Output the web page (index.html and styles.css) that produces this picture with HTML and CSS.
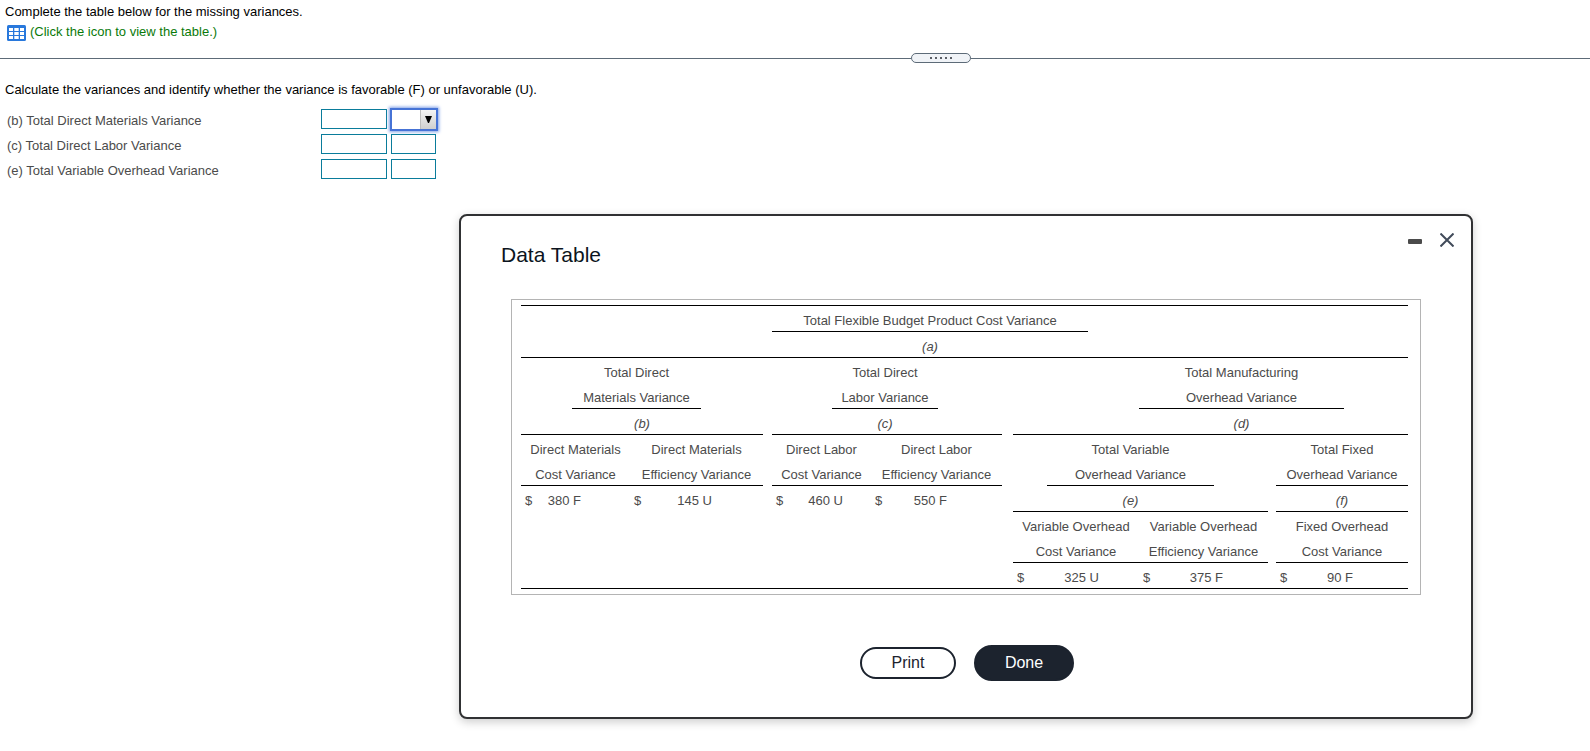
FILE: index.html
```html
<!DOCTYPE html>
<html lang="en">
<head>
  <meta charset="UTF-8">
  <meta name="viewport" content="width=device-width, initial-scale=1.0">
  <title>Data Table</title>
  <link rel="stylesheet" href="styles.css">
</head>
<body>

  <div class="question">
    <p>Complete the table below for the missing variances.</p>
    <a href="#" class="table-link">
      <svg class="table-icon" width="19" height="16" viewBox="0 0 19 16" aria-hidden="true">
        <rect width="19" height="16" rx="1.5" fill="#2878dc"/>
        <path fill="#fff" d="M2 3h4v3H2zM7.3 3h4.4v3H7.3zM13 3h4v3h-4zM2 7h4v3H2zM7.3 7h4.4v3H7.3zM13 7h4v3h-4zM2 11h4v3H2zM7.3 11h4.4v3H7.3zM13 11h4v3h-4z"/>
      </svg>
      <span>(Click the icon to view the table.)</span>
    </a>
  </div>

  <div class="divider">
    <button class="divider-handle" aria-label="Resize">
      <i></i><i></i><i></i><i></i><i></i>
    </button>
  </div>

  <form class="answer">
    <p>Calculate the variances and identify whether the variance is favorable (F) or unfavorable (U).</p>
    <div class="answer-row">
      <label for="materials">(b) Total Direct Materials Variance</label>
      <input type="text" id="materials">
      <div class="dropdown active">
        <select aria-label="Materials F or U">
          <option></option>
          <option>F</option>
          <option>U</option>
        </select>
        <span class="arrow"><svg width="7" height="7" viewBox="0 0 7 7"><path d="M0 0h7L4 7H3z"/></svg></span>
      </div>
    </div>
    <div class="answer-row">
      <label for="labor">(c) Total Direct Labor Variance</label>
      <input type="text" id="labor">
      <div class="dropdown">
        <select aria-label="Labor F or U">
          <option></option>
          <option>F</option>
          <option>U</option>
        </select>
      </div>
    </div>
    <div class="answer-row">
      <label for="overhead">(e) Total Variable Overhead Variance</label>
      <input type="text" id="overhead">
      <div class="dropdown">
        <select aria-label="Overhead F or U">
          <option></option>
          <option>F</option>
          <option>U</option>
        </select>
      </div>
    </div>
  </form>

  <!-- Data Table popup -->
  <div class="dialog" role="dialog" aria-labelledby="dialogTitle">
    <div class="dialog-header">
      <h2 id="dialogTitle">Data Table</h2>
      <div class="dialog-tools">
        <button class="tool" aria-label="Minimize">
          <svg width="14" height="14" viewBox="0 0 14 14"><rect y="6" width="14" height="5" rx="1" fill="#4b4b4b"/></svg>
        </button>
        <button class="tool" aria-label="Close">
          <svg width="14" height="14" viewBox="0 0 14 14"><path d="M.5 .5l13 13M13.5 .5l-13 13" stroke="#414b5a" stroke-width="2"/></svg>
        </button>
      </div>
    </div>

    <div class="table-box">
      <table class="variances">
        <colgroup>
          <col class="w51"><col class="w13"><col class="w45"><col class="w71"><col class="w15"><col class="w47">
          <col class="w9">
          <col class="w60"><col class="w15"><col class="w24"><col class="w67"><col class="w13"><col class="w51">
          <col class="w11">
          <col class="w34"><col class="w41"><col class="w15"><col class="w36"><col class="w75"><col class="w13"><col class="w41">
          <col class="w8">
          <col class="w68"><col class="w13"><col class="w51">
        </colgroup>
        <tr>
          <td colspan="7"></td>
          <td colspan="9" class="line">Total Flexible Budget Product Cost Variance</td>
          <td colspan="9"></td>
        </tr>
        <tr class="line-row">
          <td colspan="7"></td>
          <td colspan="9"><em>(a)</em></td>
          <td colspan="9"></td>
        </tr>
        <tr>
          <td></td>
          <td colspan="3">Total Direct</td>
          <td colspan="4"></td>
          <td colspan="3">Total Direct</td>
          <td colspan="7"></td>
          <td colspan="5">Total Manufacturing</td>
          <td colspan="2"></td>
        </tr>
        <tr>
          <td></td>
          <td colspan="3" class="line">Materials Variance</td>
          <td colspan="4"></td>
          <td colspan="3" class="line">Labor Variance</td>
          <td colspan="7"></td>
          <td colspan="5" class="line">Overhead Variance</td>
          <td colspan="2"></td>
        </tr>
        <tr>
          <td colspan="6" class="line"><em>(b)</em></td>
          <td></td>
          <td class="line"></td>
          <td colspan="3" class="line"><em>(c)</em></td>
          <td colspan="2" class="line"></td>
          <td></td>
          <td colspan="4" class="line"></td>
          <td colspan="5" class="line"><em>(d)</em></td>
          <td colspan="2" class="line"></td>
        </tr>
        <tr>
          <td colspan="3">Direct Materials</td>
          <td colspan="3">Direct Materials</td>
          <td></td>
          <td colspan="3">Direct Labor</td>
          <td colspan="3">Direct Labor</td>
          <td colspan="2"></td>
          <td colspan="4">Total Variable</td>
          <td colspan="3"></td>
          <td colspan="3">Total Fixed</td>
        </tr>
        <tr>
          <td colspan="3" class="line">Cost Variance</td>
          <td colspan="3" class="line">Efficiency Variance</td>
          <td></td>
          <td colspan="3" class="line">Cost Variance</td>
          <td colspan="3" class="line">Efficiency Variance</td>
          <td colspan="2"></td>
          <td colspan="4" class="line">Overhead Variance</td>
          <td colspan="3"></td>
          <td colspan="3" class="line">Overhead Variance</td>
        </tr>
        <tr>
          <td colspan="2"><div class="amount"><span>$</span><span>380 F</span></div></td>
          <td></td>
          <td colspan="2"><div class="amount"><span>$</span><span>145 U</span></div></td>
          <td colspan="2"></td>
          <td colspan="2"><div class="amount"><span>$</span><span>460 U</span></div></td>
          <td></td>
          <td colspan="2"><div class="amount"><span>$</span><span>550 F</span></div></td>
          <td colspan="2"></td>
          <td class="line"></td>
          <td colspan="4" class="line"><em>(e)</em></td>
          <td colspan="2" class="line"></td>
          <td></td>
          <td colspan="3" class="line"><em>(f)</em></td>
        </tr>
        <tr>
          <td colspan="14"></td>
          <td colspan="4">Variable Overhead</td>
          <td colspan="3">Variable Overhead</td>
          <td></td>
          <td colspan="3">Fixed Overhead</td>
        </tr>
        <tr>
          <td colspan="14"></td>
          <td colspan="4" class="line">Cost Variance</td>
          <td colspan="3" class="line">Efficiency Variance</td>
          <td></td>
          <td colspan="3" class="line">Cost Variance</td>
        </tr>
        <tr class="line-row">
          <td colspan="14"></td>
          <td colspan="3"><div class="amount"><span>$</span><span>325 U</span></div></td>
          <td></td>
          <td colspan="2"><div class="amount"><span>$</span><span>375 F</span></div></td>
          <td colspan="2"></td>
          <td colspan="2"><div class="amount"><span>$</span><span>90 F</span></div></td>
          <td></td>
        </tr>
      </table>
    </div>

    <div class="dialog-buttons">
      <button class="button print-button">Print</button>
      <button class="button done-button">Done</button>
    </div>
  </div>

</body>
</html>
```
FILE: styles.css
```css
* {
  box-sizing: border-box;
}
body {
  margin: 0;
  background-color: #fff;
  color: #000;
  font-family: "Liberation Sans", Arial, sans-serif;
  font-size: 13px;
  line-height: 20px;
}
p {
  margin: 0;
}
button {
  font-family: inherit;
  padding: 0;
  cursor: pointer;
}
.question {
  padding: 2px 5px 0;
}
.table-link {
  display: flex;
  align-items: flex-start;
  gap: 4px;
  padding-left: 2px;
  color: #0a7a0a;
  text-decoration: none;
}
.table-icon {
  margin-top: 3px;
}

/* divider between question and answer */
.divider {
  display: flex;
  align-items: center;
  height: 10px;
  margin-top: 11px;
}
.divider::before,
.divider::after {
  content: "";
  height: 1px;
  background-color: #5d6b78;
}
.divider::before {
  flex: 911;
}
.divider::after {
  flex: 619;
}
.divider-handle {
  display: flex;
  align-items: center;
  justify-content: center;
  gap: 3px;
  width: 60px;
  height: 10px;
  border: 1px solid #5d6b78;
  border-radius: 5px;
  background-color: #f0f3f7;
}
.divider-handle i {
  width: 2px;
  height: 2px;
  background-color: #5b5f66;
}

.answer {
  padding: 17px 5px 0;
}
.answer-row {
  display: grid;
  grid-template-columns: 310px 66px 45px;
  column-gap: 4px;
  height: 25px;
  padding-left: 2px;
  color: #4b4b4b;
}
.answer p {
  margin-bottom: 9px;
}
.answer-row label {
  padding-top: 2px;
}
.answer-row input,
.answer-row select {
  display: block;
  width: 100%;
  height: 20px;
  margin: 0;
  border: 1px solid #0a7c9b;
  border-radius: 0;
  background-color: #fff;
  appearance: none;
}
.dropdown {
  position: relative;
  height: 20px;
}
.dropdown.active {
  width: 46px;
  height: 21px;
  box-shadow: 0 0 0 1px #4673d6, 0 0 3px 2px #7f9fe6;
}
.active select {
  height: 21px;
  border-color: #4673d6;
}
.arrow {
  position: absolute;
  top: 1px;
  right: 1px;
  display: flex;
  align-items: center;
  justify-content: center;
  width: 16px;
  height: 19px;
  background: linear-gradient(#f4f4f4, #cfcfcf);
  border-left: 1px solid #bdbdbd;
  pointer-events: none;
}

/* popup */
.dialog {
  position: absolute;
  top: 214px;
  left: 459px;
  right: 117px;
  padding: 17px 16px 36px 40px;
  border: 2px solid #303133;
  border-radius: 8px;
  background-color: #fff;
  box-shadow: 0 3px 10px rgba(0, 0, 0, 0.2);
}
.dialog-header {
  display: flex;
  justify-content: space-between;
}
.dialog-header h2 {
  margin: 10px 0 0;
  color: #0c1420;
  font-size: 21px;
  font-weight: normal;
  line-height: 24px;
}
.dialog-tools {
  display: flex;
  align-items: flex-start;
  gap: 18px;
  padding-right: 1px;
}
.tool {
  border: none;
  background: none;
  line-height: 0;
}
.table-box {
  margin: 32px 34px 50px 10px;
  padding: 5px 12px 5px 9px;
  border: 1px solid #b4b4b4;
}
.variances {
  width: 100%;
  table-layout: fixed;
  border-collapse: separate;
  border-spacing: 0;
  border-top: 1px solid #000;
  color: #4b4b4b;
  text-align: center;
}
.variances td {
  height: 25px;
  padding: 4px 0 0;
  line-height: 21px;
  vertical-align: top;
  white-space: nowrap;
}
.variances .line,
.line-row td {
  border-bottom: 1px solid #000;
}
.amount {
  display: flex;
  justify-content: space-between;
  padding: 0 4px;
}
.w8 { width: 8px; }
.w9 { width: 9px; }
.w11 { width: 11px; }
.w13 { width: 13px; }
.w15 { width: 15px; }
.w24 { width: 24px; }
.w34 { width: 34px; }
.w36 { width: 36px; }
.w41 { width: 41px; }
.w45 { width: 45px; }
.w47 { width: 47px; }
.w51 { width: 51px; }
.w60 { width: 60px; }
.w67 { width: 67px; }
.w68 { width: 68px; }
.w71 { width: 71px; }
.w75 { width: 75px; }

.dialog-buttons {
  display: flex;
  align-items: center;
  justify-content: center;
  gap: 18px;
  padding-right: 22px;
}
.button {
  border: 2px solid #1c232e;
  border-radius: 18px;
  font-size: 16px;
}
.print-button {
  width: 96px;
  height: 32px;
  background-color: #fff;
  color: #1c232e;
}
.done-button {
  width: 100px;
  height: 36px;
  background-color: #1c232e;
  color: #fff;
}
```
